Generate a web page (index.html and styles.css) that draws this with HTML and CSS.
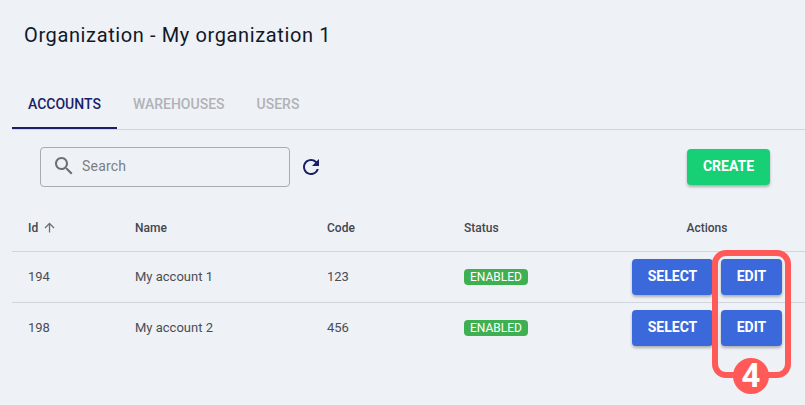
FILE: index.html
```html
<!DOCTYPE html>
<html lang="en">
<head>
<meta charset="utf-8">
<title>Organization</title>
<link rel="stylesheet" href="styles.css">
</head>
<body>
<main class="page">
  <h1 class="title">Organization - My organization 1</h1>
  <nav class="tabs">
    <a class="tab active">ACCOUNTS</a>
    <a class="tab">WAREHOUSES</a>
    <a class="tab">USERS</a>
  </nav>
  <div class="toolbar">
    <label class="search">
      <svg class="search-icon" viewBox="0 0 24 24"><path d="M15.5 14h-.79l-.28-.27C15.41 12.59 16 11.11 16 9.5 16 5.91 13.09 3 9.5 3S3 5.91 3 9.5 5.91 16 9.5 16c1.61 0 3.09-.59 4.23-1.57l.27.28v.79l5 4.99L20.49 19l-4.99-5zm-6 0C7.01 14 5 11.99 5 9.5S7.01 5 9.5 5 14 7.01 14 9.5 11.99 14 9.5 14z"/></svg>
      <span class="placeholder">Search</span>
    </label>
    <svg class="refresh" viewBox="0 0 24 24"><path d="M17.65 6.35A7.958 7.958 0 0 0 12 4c-4.42 0-7.99 3.58-7.99 8s3.57 8 7.99 8c3.73 0 6.84-2.55 7.73-6h-2.08A5.99 5.99 0 0 1 12 18c-3.31 0-6-2.69-6-6s2.69-6 6-6c1.66 0 3.14.69 4.22 1.78L13 11h7V4l-2.35 2.35z"/></svg>
    <button class="btn create">CREATE</button>
  </div>
  <table class="grid">
    <colgroup>
      <col class="c-id"><col class="c-name"><col class="c-code"><col class="c-status"><col>
    </colgroup>
    <thead>
      <tr>
        <th>Id <svg class="sort" viewBox="0 0 24 24"><path d="M4 12l1.41 1.41L11 7.83V20h2V7.83l5.58 5.59L20 12l-8-8-8 8z"/></svg></th>
        <th>Name</th><th>Code</th><th>Status</th><th class="th-actions">Actions</th>
      </tr>
    </thead>
    <tbody>
      <tr>
        <td>194</td><td>My account 1</td><td>123</td>
        <td><span class="badge">ENABLED</span></td>
        <td><div class="actions"><button class="btn primary select">SELECT</button><button class="btn primary edit">EDIT</button></div></td>
      </tr>
      <tr>
        <td>198</td><td>My account 2</td><td>456</td>
        <td><span class="badge">ENABLED</span></td>
        <td><div class="actions"><button class="btn primary select">SELECT</button><button class="btn primary edit">EDIT</button></div></td>
      </tr>
    </tbody>
  </table>
</main>
<div class="callout"></div>
<div class="callout-num">4</div>
</body>
</html>
```
FILE: styles.css
```css
* { box-sizing: border-box; }
html, body { margin: 0; height: 100%; }
body {
  background: #eef1f6;
  font-family: Roboto, "Liberation Sans", sans-serif;
  overflow: hidden;
  position: relative;
}
.page { padding: 0 0 0 12px; }
.title {
  margin: 0;
  padding: 22px 0 0 12px;
  height: 88px;
  font-size: 20px;
  line-height: 26px;
  font-weight: 400;
  letter-spacing: 0.62px;
  color: #111827;
}
.tabs {
  display: flex;
  height: 42px;
  border-bottom: 1px solid #d2d5dc;
}
.tab {
  height: 41px;
  padding: 0 16px 9px;
  display: flex;
  align-items: center;
  font-size: 14px;
  font-weight: 500;
  color: #b0b2b7;
}
.tab.active {
  color: #1b1f66;
  border-bottom: 2px solid #1b1f66;
  padding-bottom: 7px;
}
.toolbar {
  display: flex;
  padding: 17px 35px 0 28px;
  height: 75px;
  align-items: flex-start;
}
.search {
  width: 250px;
  height: 40px;
  border: 1px solid #a8abb0;
  border-radius: 4px;
  display: flex;
  align-items: center;
  padding: 0 0 2px 11px;
  gap: 6px;
}
.search-icon { width: 24px; height: 24px; fill: #6b6f76; }
.placeholder { font-size: 14px; color: #7b7e84; letter-spacing: 0.2px; }
.refresh { width: 24px; height: 24px; fill: #1b1f66; margin: 8px 0 0 9px; }
.btn {
  border: 0;
  border-radius: 4px;
  font-family: inherit;
  font-size: 14px;
  font-weight: 700;
  color: #fff;
  height: 36px;
  padding: 0 0 2px;
  box-shadow: 0 2px 3px rgba(0,0,0,.28);
}
.create { width: 83px; margin: 2px 0 0 auto; background: #17cf74; }
.primary { background: #3b69dc; }
.select { width: 81px; }
.edit { width: 61px; }
.grid {
  width: 793px;
  table-layout: fixed;
  border-collapse: collapse;
  font-size: 13px;
}
.c-id { width: 107px; }
.c-name { width: 192px; }
.c-code { width: 137px; }
.c-status { width: 168px; }
th {
  height: 46px;
  padding: 0 0 0 16px;
  text-align: left;
  font-weight: 500;
  font-size: 12px;
  color: #43464d;
  border-bottom: 1px solid #d2d5dc;
}
th.th-actions { text-align: center; padding: 0 7px 0 0; }
.sort { width: 15px; height: 15px; fill: #6b6f76; vertical-align: -3px; margin-left: 1px; }
td {
  height: 51px;
  padding: 0 0 0 16px;
  font-size: 13px;
  color: #4a4d54;
  border-bottom: 1px solid #d2d5dc;
}
tbody tr:last-child td { border-bottom: 0; }
.badge {
  display: inline-block;
  width: 64px;
  height: 16px;
  line-height: 16px;
  text-align: center;
  border-radius: 4px;
  background: #3fb052;
  color: #fff;
  font-size: 12px;
  font-weight: 400;
}
.actions { display: flex; gap: 8px; }
.callout {
  position: absolute;
  left: 712px;
  top: 250px;
  width: 79px;
  height: 128px;
  border: 6px solid #ff5a57;
  border-radius: 14px;
}
.callout-num {
  position: absolute;
  left: 733px;
  top: 358px;
  width: 36px;
  height: 36px;
  border-radius: 50%;
  background: #ff5a57;
  color: #fff;
  font-size: 33px;
  font-weight: 700;
  line-height: 36px;
  text-align: center;
}
```
